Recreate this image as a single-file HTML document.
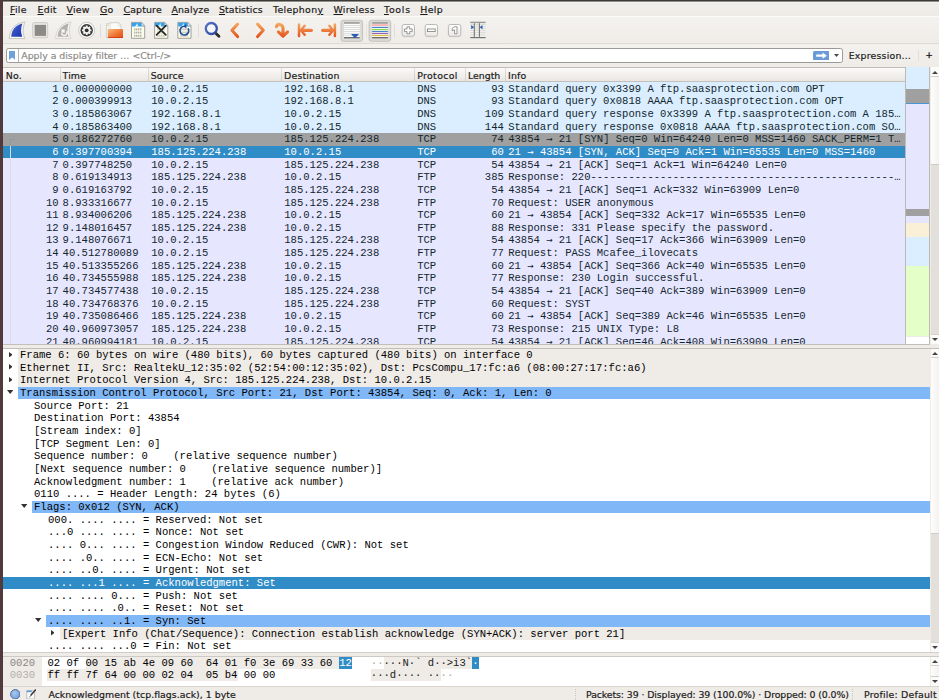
<!DOCTYPE html>
<html lang="en"><head><meta charset="utf-8"><title>Wireshark</title>
<style>
html,body{margin:0;padding:0}
body{width:939px;height:700px;overflow:hidden;position:relative;background:#efebe7;font-family:"DejaVu Sans","Liberation Sans",sans-serif;font-size:9.4px;color:#1a1a1a}
div,span,svg{position:absolute;box-sizing:border-box}
span.ar,span.il,u{position:static}
.m{font-family:"Liberation Mono",monospace;font-size:10.565px;line-height:12.667px;white-space:pre;color:#12272e}
.ar{font-family:"DejaVu Sans Mono","Liberation Mono",monospace;line-height:0}
.s{white-space:pre;line-height:12px;-webkit-text-stroke:0.18px currentColor}
u{text-decoration:underline;text-underline-offset:1.4px}
.row{left:3px;width:902px;height:12.667px}
.dns{background:#daeeff}.tcp{background:#e7e6ff}.syn{background:#a0a0a0}.sel{background:#308cc6}
.sel .m{color:#fff}
.d{color:#000}
</style></head><body>

<div style="left:0;top:0;width:939px;height:1px;background:#3b3a36"></div><div style="left:0;top:1px;width:939px;height:1px;background:#908d89"></div>
<div style="left:0;top:0;width:3.2px;height:700px;background:#513a3c"></div>
<div id="menubar" style="left:3.2px;top:2px;width:936px;height:14.2px;background:linear-gradient(#f6f5f3 0,#f0eeea 1.2px,#eeebe7)"></div>
<span class="s" style="left:10px;top:3.6px;letter-spacing:0.274px"><u>F</u>ile</span>
<span class="s" style="left:37.5px;top:3.6px;letter-spacing:0.282px"><u>E</u>dit</span>
<span class="s" style="left:66.5px;top:3.6px;letter-spacing:0.259px"><u>V</u>iew</span>
<span class="s" style="left:100px;top:3.6px;letter-spacing:0.142px"><u>G</u>o</span>
<span class="s" style="left:123.5px;top:3.6px;letter-spacing:0.146px"><u>C</u>apture</span>
<span class="s" style="left:171.5px;top:3.6px;letter-spacing:0.121px"><u>A</u>nalyze</span>
<span class="s" style="left:219px;top:3.6px;letter-spacing:0.094px"><u>S</u>tatistics</span>
<span class="s" style="left:273px;top:3.6px;letter-spacing:0.322px">Telephon<u>y</u></span>
<span class="s" style="left:333.5px;top:3.6px;letter-spacing:0.256px"><u>W</u>ireless</span>
<span class="s" style="left:384px;top:3.6px;letter-spacing:0.738px"><u>T</u>ools</span>
<span class="s" style="left:420.2px;top:3.6px;letter-spacing:0.377px"><u>H</u>elp</span>
<div id="toolbar" style="left:3.2px;top:16.2px;width:936px;height:27.6px;background:linear-gradient(#f4f2ef,#efece8);border-top:0.7px solid #fbfaf9;border-bottom:0.7px solid #dedad5"></div>
<svg style="left:0;top:17px" width="939" height="27" viewBox="0 17 939 27">
<defs>
<linearGradient id="gb" x1="0" y1="0" x2="1" y2="1"><stop offset="0" stop-color="#4a68d8"/><stop offset="1" stop-color="#1a30a8"/></linearGradient>
<linearGradient id="go" gradientUnits="userSpaceOnUse" x1="0" y1="23" x2="0" y2="37.5"><stop offset="0" stop-color="#f4ac66"/><stop offset="1" stop-color="#e2501a"/></linearGradient>
<linearGradient id="gf" x1="0" y1="0" x2="1" y2="1"><stop offset="0" stop-color="#f8bc7c"/><stop offset="0.6" stop-color="#ee7030"/><stop offset="1" stop-color="#e44a14"/></linearGradient>
<linearGradient id="gbtn" x1="0" y1="0" x2="0" y2="1"><stop offset="0" stop-color="#ffffff"/><stop offset="1" stop-color="#e9e8e6"/></linearGradient>
<linearGradient id="gmag" x1="0" y1="0" x2="1" y2="1"><stop offset="0" stop-color="#5673cc"/><stop offset="1" stop-color="#2c469c"/></linearGradient>
</defs>
<!-- start capture (blue fin) -->
<path d="M9.2,38.6C9.9,29.2 15.3,22.9 24.9,21.9C22.6,27.6 22.8,33.4 24.7,38.6Z" fill="#f7f7f6" stroke="#bbb9b5" stroke-width="0.8"/>
<path d="M11.2,36.8C11.8,29.8 15.7,24.9 22.4,23.6C20.6,28.4 20.8,32.8 22.2,36.8Z" fill="url(#gb)"/>
<!-- stop -->
<rect x="32.7" y="22.6" width="15" height="15.2" rx="1.2" fill="#e8e6e2" stroke="#c6c3bf" stroke-width="0.8"/>
<rect x="34.7" y="24.9" width="11.3" height="11" fill="#8b8a86"/>
<!-- restart (gray fin) -->
<path d="M55.5,38.6C56.2,29.2 61.6,22.9 71.1,21.9C68.8,27.6 69,33.4 70.9,38.6Z" fill="#f4f3f1" stroke="#d0cecb" stroke-width="0.8"/>
<path d="M57.6,36.8C58.2,29.8 62.1,24.9 68.7,23.6C66.9,28.4 67.1,32.8 68.5,36.8Z" fill="#b3b1ae"/>
<path d="M61.5,33.2A2.8,2.8 0 1 0 66.6,31.2" fill="none" stroke="#f6f6f5" stroke-width="1.5"/>
<rect x="61.4" y="29.4" width="3.3" height="3.3" fill="#f6f6f5"/>
<!-- options (gear) -->
<circle cx="86.7" cy="30.3" r="8" fill="#fbfbfa" stroke="#b8b6b2" stroke-width="0.7"/>
<circle cx="86.7" cy="30.3" r="6.2" fill="#3b3b3b"/>
<g fill="#f4f4f4"><circle cx="86.7" cy="30.3" r="3.5"/>
<g id="teeth"><rect x="85.7" y="25.6" width="2" height="9.4" rx="0.4"/><rect x="85.7" y="25.6" width="2" height="9.4" rx="0.4" transform="rotate(45 86.7 30.3)"/><rect x="85.7" y="25.6" width="2" height="9.4" rx="0.4" transform="rotate(90 86.7 30.3)"/><rect x="85.7" y="25.6" width="2" height="9.4" rx="0.4" transform="rotate(135 86.7 30.3)"/></g></g>
<circle cx="86.7" cy="30.3" r="1.9" fill="#2e2e2e"/>
<!-- separator -->
<rect x="100.1" y="23.6" width="0.8" height="13.6" fill="#dcd9d5"/>
<!-- open folder -->
<path d="M106.4,23.6H110.2V22.6H118.6L121,25V37.6H106.4Z" fill="#f1f1f0" stroke="#c3c2bf" stroke-width="0.6"/>
<rect x="107.2" y="24.6" width="1.6" height="1.4" fill="#f5c98a"/>
<path d="M110.6,23H118.2V26.2H120.6V30H110.6Z" fill="#fbfbfb" stroke="#d2d1ce" stroke-width="0.4"/>
<path d="M108.4,29H122.4Q123,29 123,29.6V37.2Q123,38 122.2,38H108.6Q107.8,38 107.8,37.2V29.6Q107.8,29 108.4,29Z" fill="url(#gf)"/>
<rect x="107.8" y="37.1" width="15.2" height="0.9" fill="#d63c10"/>
<!-- save -->
<g transform="translate(131.1,22)"><path d="M0.4,0.4H10.6L13.6,3.6V16.3H0.4Z" fill="#fcfdea" stroke="#8b8c88" stroke-width="0.8"/><path d="M0.8,0.8H10.4L13.2,3.8V4.6H0.8Z" fill="#35a3ea"/><path d="M3.6,4.6Q5.2,3.6 6.2,0.9Q6.3,3 7.2,4.6Z" fill="#f4fbff"/><path d="M10.5,0.8V3.7H13.2Z" fill="#f2f2ee" stroke="#a5a5a0" stroke-width="0.4"/><g fill="#a8a9a4"><rect x="3" y="6.4" width="1.3" height="1.9"/><rect x="5" y="6.4" width="1.3" height="1.9"/><rect x="7" y="6.4" width="1.3" height="1.9"/><rect x="9" y="6.4" width="1.3" height="1.9"/><rect x="3" y="9.6" width="1.3" height="1.9"/><rect x="5" y="9.6" width="1.3" height="1.9"/><rect x="7" y="9.6" width="1.3" height="1.9"/><rect x="9" y="9.6" width="1.3" height="1.9"/><rect x="3" y="12.8" width="1.3" height="1.9"/><rect x="5" y="12.8" width="1.3" height="1.9"/><rect x="7" y="12.8" width="1.3" height="1.9"/><rect x="9" y="12.8" width="1.3" height="1.9"/></g></g>
<!-- close -->
<g transform="translate(154.2,22)"><path d="M0.4,0.4H10.6L13.6,3.6V16.3H0.4Z" fill="#fcfdea" stroke="#8b8c88" stroke-width="0.8"/><path d="M0.8,0.8H10.4L13.2,3.8V4.6H0.8Z" fill="#35a3ea"/><path d="M3.6,4.6Q5.2,3.6 6.2,0.9Q6.3,3 7.2,4.6Z" fill="#f4fbff"/><path d="M10.5,0.8V3.7H13.2Z" fill="#f2f2ee" stroke="#a5a5a0" stroke-width="0.4"/><g fill="#a8a9a4" opacity="0.7"><rect x="3" y="6.4" width="1.3" height="1.9"/><rect x="5" y="6.4" width="1.3" height="1.9"/><rect x="7" y="6.4" width="1.3" height="1.9"/><rect x="9" y="6.4" width="1.3" height="1.9"/><rect x="3" y="9.6" width="1.3" height="1.9"/><rect x="5" y="9.6" width="1.3" height="1.9"/><rect x="7" y="9.6" width="1.3" height="1.9"/><rect x="9" y="9.6" width="1.3" height="1.9"/><rect x="3" y="12.8" width="1.3" height="1.9"/><rect x="5" y="12.8" width="1.3" height="1.9"/><rect x="7" y="12.8" width="1.3" height="1.9"/><rect x="9" y="12.8" width="1.3" height="1.9"/></g></g>
<path d="M156.6,25.6L165.8,34.8M165.8,25.6L156.6,34.8" stroke="#262626" stroke-width="1.7" stroke-linecap="round"/>
<!-- reload -->
<g transform="translate(177.4,22)"><path d="M0.4,0.4H10.6L13.6,3.6V16.3H0.4Z" fill="#fcfdea" stroke="#8b8c88" stroke-width="0.8"/><path d="M0.8,0.8H10.4L13.2,3.8V4.6H0.8Z" fill="#35a3ea"/><path d="M3.6,4.6Q5.2,3.6 6.2,0.9Q6.3,3 7.2,4.6Z" fill="#f4fbff"/><path d="M10.5,0.8V3.7H13.2Z" fill="#f2f2ee" stroke="#a5a5a0" stroke-width="0.4"/><g fill="#a8a9a4" opacity="0.8"><rect x="3" y="6.4" width="1.3" height="1.9"/><rect x="5" y="6.4" width="1.3" height="1.9"/><rect x="7" y="6.4" width="1.3" height="1.9"/><rect x="9" y="6.4" width="1.3" height="1.9"/><rect x="3" y="9.6" width="1.3" height="1.9"/><rect x="5" y="9.6" width="1.3" height="1.9"/><rect x="7" y="9.6" width="1.3" height="1.9"/><rect x="9" y="9.6" width="1.3" height="1.9"/><rect x="3" y="12.8" width="1.3" height="1.9"/><rect x="5" y="12.8" width="1.3" height="1.9"/><rect x="7" y="12.8" width="1.3" height="1.9"/><rect x="9" y="12.8" width="1.3" height="1.9"/></g></g>
<path d="M188.2,28.4A4.4,4.4 0 1 1 184.4,26.2" fill="none" stroke="#1f4b9c" stroke-width="1.6"/>
<path d="M186.4,24.2L183,26.2L186.4,28.4Z" fill="#1f4b9c"/>
<!-- separator -->
<rect x="198.1" y="23.6" width="0.8" height="13.6" fill="#dcd9d5"/>
<!-- find -->
<path d="M215.2,32.8L218.9,36.2" stroke="#2b2b2b" stroke-width="2.9" stroke-linecap="round"/>
<circle cx="211.3" cy="28.5" r="5.5" fill="#f6f6f6" stroke="url(#gmag)" stroke-width="2.3"/>
<!-- back / forward -->
<path d="M237.6,24.1L231.9,30.3L237.6,36.5" fill="none" stroke="#f9f4ef" stroke-width="4.6" stroke-linecap="round" stroke-linejoin="round"/>
<path d="M237.6,24.1L231.9,30.3L237.6,36.5" fill="none" stroke="url(#go)" stroke-width="3.1" stroke-linecap="round" stroke-linejoin="round"/>
<path d="M257.6,24.1L263.3,30.3L257.6,36.5" fill="none" stroke="#f9f4ef" stroke-width="4.6" stroke-linecap="round" stroke-linejoin="round"/>
<path d="M257.6,24.1L263.3,30.3L257.6,36.5" fill="none" stroke="url(#go)" stroke-width="3.1" stroke-linecap="round" stroke-linejoin="round"/>
<!-- jump -->
<path d="M276.4,26.6C277.4,23.6 282.2,23.4 283,27.8L283,34" fill="none" stroke="url(#go)" stroke-width="3.1" stroke-linecap="round"/>
<path d="M278.4,31.8L283,36.2L287.6,31.8" fill="none" stroke="url(#go)" stroke-width="3.1" stroke-linecap="round" stroke-linejoin="round"/>
<!-- first -->
<g stroke="url(#go)" stroke-linecap="round" stroke-linejoin="round" fill="none">
<path d="M299,24.6V36" stroke-width="2.5"/><path d="M301.4,30.3H311.4" stroke-width="3.2"/><path d="M304.6,25.8L301,30.3L304.6,34.8" stroke-width="2.5"/>
<path d="M334.9,24.6V36" stroke-width="2.5"/><path d="M322.6,30.3H332.6" stroke-width="3.2"/><path d="M329.4,25.8L333,30.3L329.4,34.8" stroke-width="2.5"/>
</g>
<!-- autoscroll (pressed) -->
<rect x="341" y="20.3" width="21.6" height="21" rx="2.4" fill="#dddbd7" stroke="#bbb8b4" stroke-width="0.8"/>
<rect x="344" y="22.2" width="15.7" height="16.2" fill="#fdfdfd"/>
<rect x="344" y="22.2" width="15.7" height="1.5" fill="#8e908e"/>
<g fill="#c4c6c3"><rect x="344" y="25.3" width="15.7" height="0.6"/><rect x="344" y="27.2" width="15.7" height="0.6"/><rect x="344" y="29.1" width="15.7" height="0.6"/><rect x="344" y="31" width="15.7" height="0.6"/><rect x="344" y="32.9" width="15.7" height="0.6"/><rect x="344" y="34.8" width="15.7" height="0.6"/></g>
<rect x="344" y="37.1" width="15.7" height="1.3" fill="#5f615f"/>
<path d="M351.2,34H358.8Q358.4,35.6 356.6,36.2V37.8H353.4V36.2Q351.6,35.6 351.2,34Z" fill="#2a5db2"/>
<rect x="366" y="24" width="0.8" height="13" fill="#e1ded9"/>
<!-- colorize (pressed) -->
<rect x="369.1" y="20.3" width="21.6" height="21" rx="2.4" fill="#dddbd7" stroke="#bbb8b4" stroke-width="0.8"/>
<rect x="372.1" y="22.2" width="15.8" height="16.2" fill="#fdfdfd"/>
<rect x="372.1" y="22.2" width="15.8" height="1.5" fill="#8e908e"/>
<rect x="372.1" y="24.4" width="15.8" height="1.3" fill="#f29494"/>
<rect x="372.1" y="26.8" width="15.8" height="1.2" fill="#4f82c8"/>
<rect x="372.1" y="28.9" width="15.8" height="1.2" fill="#84da42"/>
<rect x="372.1" y="30.9" width="15.8" height="1.2" fill="#4f82c8"/>
<rect x="372.1" y="32.9" width="15.8" height="1.2" fill="#9365a4"/>
<rect x="372.1" y="34.9" width="15.8" height="1.2" fill="#dcbc44"/>
<rect x="372.1" y="37" width="15.8" height="1.4" fill="#6a6c6a"/>
<rect x="394.1" y="23.6" width="0.8" height="13.6" fill="#dcd9d5"/>
<!-- zoom in/out/1:1 -->
<g stroke="#a9a7a3" stroke-width="0.8" fill="url(#gbtn)"><rect x="402.1" y="24.5" width="12.4" height="11.8" rx="2"/><rect x="425.2" y="24.5" width="12.4" height="11.8" rx="2"/><rect x="448.4" y="24.5" width="12.4" height="11.8" rx="2"/></g>
<g fill="#c9c7c3"><rect x="403.2" y="36.4" width="10.2" height="0.7" /><rect x="426.3" y="36.4" width="10.2" height="0.7"/><rect x="449.5" y="36.4" width="10.2" height="0.7"/></g>
<g fill="#fff" stroke="#7f7f7d" stroke-width="0.8"><path d="M407,26.8H409.6V29H412.2V31.6H409.6V33.8H407V31.6H404.4V29H407Z"/><rect x="427.4" y="29" width="7.8" height="2.6"/><path d="M454.4,26.8H457V33.8H454.6V29.8L452.2,30.8V28.4Z"/></g>
<!-- resize columns -->
<rect x="470.2" y="22" width="15.4" height="16" fill="#fbfbfa"/>
<rect x="470.2" y="21.7" width="15.4" height="1.5" fill="#999b98"/>
<g fill="#c6c8c4"><rect x="470.2" y="24.4" width="15.4" height="0.8"/><rect x="470.2" y="26.4" width="15.4" height="0.8"/><rect x="470.2" y="28.4" width="15.4" height="0.8"/><rect x="470.2" y="30.4" width="15.4" height="0.8"/><rect x="470.2" y="32.4" width="15.4" height="0.8"/><rect x="470.2" y="34.5" width="15.4" height="0.8"/></g>
<rect x="470.2" y="36.9" width="15.4" height="1.3" fill="#727472"/>
<rect x="473.8" y="23.2" width="1" height="13.7" fill="#6e706e"/><rect x="478.9" y="23.2" width="1" height="13.7" fill="#6e706e"/>
<path d="M471.2,25.1L474,27.2L471.2,29.3Z" fill="#2a5db2"/><path d="M482.5,25.1L479.7,27.2L482.5,29.3Z" fill="#2a5db2"/>
</svg>

<div id="filterbar" style="left:3.2px;top:43.8px;width:936px;height:23.6px;background:linear-gradient(#f3f1ee,#efece8)"></div>
<div style="left:6px;top:48.1px;width:837px;height:14.8px;background:#fff;border:1px solid #9c9a97;border-radius:2.5px"></div>
<div style="left:18.4px;top:49px;width:0.8px;height:12.6px;background:#b9b6b2"></div>
<svg style="left:9px;top:51px" width="6.4" height="9" viewBox="0 0 6.4 9"><path d="M0,0H6.4V9L3.2,6.6L0,9Z" fill="#6ea2d9"/></svg>
<span class="s" style="left:21.3px;top:50.1px;color:#8c8a87;letter-spacing:-0.019px">Apply a display filter … &lt;Ctrl-/&gt;</span>
<svg style="left:812.7px;top:50.8px" width="16.8" height="9.4" viewBox="0 0 16.8 9.4"><rect width="16.8" height="9.4" rx="1.6" fill="#6b9bd6"/><path d="M3.2,3.6H9.6V1.6L13.8,4.7L9.6,7.8V5.8H3.2Z" fill="#fff"/></svg>
<svg style="left:834.4px;top:53.6px" width="5" height="3" viewBox="0 0 5 3"><path d="M0,0H5L2.5,3Z" fill="#4a4a4a"/></svg>
<span class="s" style="left:848.7px;top:50.1px;letter-spacing:0.194px">Expression…</span>
<div style="left:918.4px;top:49.6px;width:0.8px;height:11.5px;background:#e2dfda"></div>
<span class="s" style="left:925.4px;top:49.4px;font-size:8.6px;-webkit-text-stroke:0.35px #1a1a1a">+</span>
<div id="plhead" style="left:3.2px;top:67.4px;width:901.8px;height:15px;background:linear-gradient(#fbfaf9,#f3f1ee 45%,#e9e6e2);border-top:0.7px solid #c1bdb8;border-bottom:0.7px solid #c4c0bb"></div>
<span class="s" style="left:5.8px;top:70.1px;letter-spacing:0.241px">No.</span>
<span class="s" style="left:62.6px;top:70.1px;letter-spacing:0.112px">Time</span>
<span class="s" style="left:150.8px;top:70.1px;letter-spacing:0.116px">Source</span>
<span class="s" style="left:284.1px;top:70.1px;letter-spacing:0.155px">Destination</span>
<span class="s" style="left:417.2px;top:70.1px;letter-spacing:0.352px">Protocol</span>
<span class="s" style="left:468px;top:70.1px;letter-spacing:-0.007px">Length</span>
<span class="s" style="left:508px;top:70.1px;letter-spacing:0.138px">Info</span>
<div style="left:59.9px;top:68.4px;width:1px;height:13.4px;background:linear-gradient(#e0ddd9,#cfcbc6)"></div>
<div style="left:147.6px;top:68.4px;width:1px;height:13.4px;background:linear-gradient(#e0ddd9,#cfcbc6)"></div>
<div style="left:281.3px;top:68.4px;width:1px;height:13.4px;background:linear-gradient(#e0ddd9,#cfcbc6)"></div>
<div style="left:414.4px;top:68.4px;width:1px;height:13.4px;background:linear-gradient(#e0ddd9,#cfcbc6)"></div>
<div style="left:465.1px;top:68.4px;width:1px;height:13.4px;background:linear-gradient(#e0ddd9,#cfcbc6)"></div>
<div style="left:505.1px;top:68.4px;width:1px;height:13.4px;background:linear-gradient(#e0ddd9,#cfcbc6)"></div>
<div id="plist" style="left:3.2px;top:82.4px;width:901.8px;height:261.6px;overflow:hidden;background:#e7e6ff">
<div class="row dns" style="left:0;top:0.000px">
<span class="m" style="right:846.60px;top:0.45px">1</span><span class="m" style="left:59.40px;top:0.45px">0.000000000</span><span class="m" style="left:148.10px;top:0.45px">10.0.2.15</span><span class="m" style="left:281.10px;top:0.45px">192.168.8.1</span><span class="m" style="left:414.00px;top:0.45px">DNS</span><span class="m" style="right:401.40px;top:0.45px">93</span><span class="m" style="left:505.00px;top:0.45px">Standard query 0x3399 A ftp.saasprotection.com OPT</span>
</div>
<div class="row dns" style="left:0;top:12.635px">
<span class="m" style="right:846.60px;top:0.45px">2</span><span class="m" style="left:59.40px;top:0.45px">0.000399913</span><span class="m" style="left:148.10px;top:0.45px">10.0.2.15</span><span class="m" style="left:281.10px;top:0.45px">192.168.8.1</span><span class="m" style="left:414.00px;top:0.45px">DNS</span><span class="m" style="right:401.40px;top:0.45px">93</span><span class="m" style="left:505.00px;top:0.45px">Standard query 0x0818 AAAA ftp.saasprotection.com OPT</span>
</div>
<div class="row dns" style="left:0;top:25.270px">
<span class="m" style="right:846.60px;top:0.45px">3</span><span class="m" style="left:59.40px;top:0.45px">0.185863067</span><span class="m" style="left:148.10px;top:0.45px">192.168.8.1</span><span class="m" style="left:281.10px;top:0.45px">10.0.2.15</span><span class="m" style="left:414.00px;top:0.45px">DNS</span><span class="m" style="right:401.40px;top:0.45px">109</span><span class="m" style="left:505.00px;top:0.45px">Standard query response 0x3399 A ftp.saasprotection.com A 185…</span>
</div>
<div class="row dns" style="left:0;top:37.905px">
<span class="m" style="right:846.60px;top:0.45px">4</span><span class="m" style="left:59.40px;top:0.45px">0.185863400</span><span class="m" style="left:148.10px;top:0.45px">192.168.8.1</span><span class="m" style="left:281.10px;top:0.45px">10.0.2.15</span><span class="m" style="left:414.00px;top:0.45px">DNS</span><span class="m" style="right:401.40px;top:0.45px">144</span><span class="m" style="left:505.00px;top:0.45px">Standard query response 0x0818 AAAA ftp.saasprotection.com SO…</span>
</div>
<div class="row syn" style="left:0;top:50.540px">
<span class="m" style="right:846.60px;top:0.45px">5</span><span class="m" style="left:59.40px;top:0.45px">0.186272760</span><span class="m" style="left:148.10px;top:0.45px">10.0.2.15</span><span class="m" style="left:281.10px;top:0.45px">185.125.224.238</span><span class="m" style="left:414.00px;top:0.45px">TCP</span><span class="m" style="right:401.40px;top:0.45px">74</span><span class="m" style="left:505.00px;top:0.45px">43854 <span class="ar">→</span> 21 [SYN] Seq=0 Win=64240 Len=0 MSS=1460 SACK_PERM=1 T…</span>
</div>
<div class="row sel" style="left:0;top:63.175px">
<span class="m" style="right:846.60px;top:0.45px">6</span><span class="m" style="left:59.40px;top:0.45px">0.397700394</span><span class="m" style="left:148.10px;top:0.45px">185.125.224.238</span><span class="m" style="left:281.10px;top:0.45px">10.0.2.15</span><span class="m" style="left:414.00px;top:0.45px">TCP</span><span class="m" style="right:401.40px;top:0.45px">60</span><span class="m" style="left:505.00px;top:0.45px">21 <span class="ar">→</span> 43854 [SYN, ACK] Seq=0 Ack=1 Win=65535 Len=0 MSS=1460</span>
</div>
<div class="row tcp" style="left:0;top:75.810px">
<span class="m" style="right:846.60px;top:0.45px">7</span><span class="m" style="left:59.40px;top:0.45px">0.397748250</span><span class="m" style="left:148.10px;top:0.45px">10.0.2.15</span><span class="m" style="left:281.10px;top:0.45px">185.125.224.238</span><span class="m" style="left:414.00px;top:0.45px">TCP</span><span class="m" style="right:401.40px;top:0.45px">54</span><span class="m" style="left:505.00px;top:0.45px">43854 <span class="ar">→</span> 21 [ACK] Seq=1 Ack=1 Win=64240 Len=0</span>
</div>
<div class="row tcp" style="left:0;top:88.445px">
<span class="m" style="right:846.60px;top:0.45px">8</span><span class="m" style="left:59.40px;top:0.45px">0.619134913</span><span class="m" style="left:148.10px;top:0.45px">185.125.224.238</span><span class="m" style="left:281.10px;top:0.45px">10.0.2.15</span><span class="m" style="left:414.00px;top:0.45px">FTP</span><span class="m" style="right:401.40px;top:0.45px">385</span><span class="m" style="left:505.00px;top:0.45px">Response: 220------------------------------------------------…</span>
</div>
<div class="row tcp" style="left:0;top:101.080px">
<span class="m" style="right:846.60px;top:0.45px">9</span><span class="m" style="left:59.40px;top:0.45px">0.619163792</span><span class="m" style="left:148.10px;top:0.45px">10.0.2.15</span><span class="m" style="left:281.10px;top:0.45px">185.125.224.238</span><span class="m" style="left:414.00px;top:0.45px">TCP</span><span class="m" style="right:401.40px;top:0.45px">54</span><span class="m" style="left:505.00px;top:0.45px">43854 <span class="ar">→</span> 21 [ACK] Seq=1 Ack=332 Win=63909 Len=0</span>
</div>
<div class="row tcp" style="left:0;top:113.715px">
<span class="m" style="right:846.60px;top:0.45px">10</span><span class="m" style="left:59.40px;top:0.45px">8.933316677</span><span class="m" style="left:148.10px;top:0.45px">10.0.2.15</span><span class="m" style="left:281.10px;top:0.45px">185.125.224.238</span><span class="m" style="left:414.00px;top:0.45px">FTP</span><span class="m" style="right:401.40px;top:0.45px">70</span><span class="m" style="left:505.00px;top:0.45px">Request: USER anonymous</span>
</div>
<div class="row tcp" style="left:0;top:126.350px">
<span class="m" style="right:846.60px;top:0.45px">11</span><span class="m" style="left:59.40px;top:0.45px">8.934006206</span><span class="m" style="left:148.10px;top:0.45px">185.125.224.238</span><span class="m" style="left:281.10px;top:0.45px">10.0.2.15</span><span class="m" style="left:414.00px;top:0.45px">TCP</span><span class="m" style="right:401.40px;top:0.45px">60</span><span class="m" style="left:505.00px;top:0.45px">21 <span class="ar">→</span> 43854 [ACK] Seq=332 Ack=17 Win=65535 Len=0</span>
</div>
<div class="row tcp" style="left:0;top:138.985px">
<span class="m" style="right:846.60px;top:0.45px">12</span><span class="m" style="left:59.40px;top:0.45px">9.148016457</span><span class="m" style="left:148.10px;top:0.45px">185.125.224.238</span><span class="m" style="left:281.10px;top:0.45px">10.0.2.15</span><span class="m" style="left:414.00px;top:0.45px">FTP</span><span class="m" style="right:401.40px;top:0.45px">88</span><span class="m" style="left:505.00px;top:0.45px">Response: 331 Please specify the password.</span>
</div>
<div class="row tcp" style="left:0;top:151.620px">
<span class="m" style="right:846.60px;top:0.45px">13</span><span class="m" style="left:59.40px;top:0.45px">9.148076671</span><span class="m" style="left:148.10px;top:0.45px">10.0.2.15</span><span class="m" style="left:281.10px;top:0.45px">185.125.224.238</span><span class="m" style="left:414.00px;top:0.45px">TCP</span><span class="m" style="right:401.40px;top:0.45px">54</span><span class="m" style="left:505.00px;top:0.45px">43854 <span class="ar">→</span> 21 [ACK] Seq=17 Ack=366 Win=63909 Len=0</span>
</div>
<div class="row tcp" style="left:0;top:164.255px">
<span class="m" style="right:846.60px;top:0.45px">14</span><span class="m" style="left:59.40px;top:0.45px">40.512780089</span><span class="m" style="left:148.10px;top:0.45px">10.0.2.15</span><span class="m" style="left:281.10px;top:0.45px">185.125.224.238</span><span class="m" style="left:414.00px;top:0.45px">FTP</span><span class="m" style="right:401.40px;top:0.45px">77</span><span class="m" style="left:505.00px;top:0.45px">Request: PASS Mcafee_ilovecats</span>
</div>
<div class="row tcp" style="left:0;top:176.890px">
<span class="m" style="right:846.60px;top:0.45px">15</span><span class="m" style="left:59.40px;top:0.45px">40.513355266</span><span class="m" style="left:148.10px;top:0.45px">185.125.224.238</span><span class="m" style="left:281.10px;top:0.45px">10.0.2.15</span><span class="m" style="left:414.00px;top:0.45px">TCP</span><span class="m" style="right:401.40px;top:0.45px">60</span><span class="m" style="left:505.00px;top:0.45px">21 <span class="ar">→</span> 43854 [ACK] Seq=366 Ack=40 Win=65535 Len=0</span>
</div>
<div class="row tcp" style="left:0;top:189.525px">
<span class="m" style="right:846.60px;top:0.45px">16</span><span class="m" style="left:59.40px;top:0.45px">40.734555988</span><span class="m" style="left:148.10px;top:0.45px">185.125.224.238</span><span class="m" style="left:281.10px;top:0.45px">10.0.2.15</span><span class="m" style="left:414.00px;top:0.45px">FTP</span><span class="m" style="right:401.40px;top:0.45px">77</span><span class="m" style="left:505.00px;top:0.45px">Response: 230 Login successful.</span>
</div>
<div class="row tcp" style="left:0;top:202.160px">
<span class="m" style="right:846.60px;top:0.45px">17</span><span class="m" style="left:59.40px;top:0.45px">40.734577438</span><span class="m" style="left:148.10px;top:0.45px">10.0.2.15</span><span class="m" style="left:281.10px;top:0.45px">185.125.224.238</span><span class="m" style="left:414.00px;top:0.45px">TCP</span><span class="m" style="right:401.40px;top:0.45px">54</span><span class="m" style="left:505.00px;top:0.45px">43854 <span class="ar">→</span> 21 [ACK] Seq=40 Ack=389 Win=63909 Len=0</span>
</div>
<div class="row tcp" style="left:0;top:214.795px">
<span class="m" style="right:846.60px;top:0.45px">18</span><span class="m" style="left:59.40px;top:0.45px">40.734768376</span><span class="m" style="left:148.10px;top:0.45px">10.0.2.15</span><span class="m" style="left:281.10px;top:0.45px">185.125.224.238</span><span class="m" style="left:414.00px;top:0.45px">FTP</span><span class="m" style="right:401.40px;top:0.45px">60</span><span class="m" style="left:505.00px;top:0.45px">Request: SYST</span>
</div>
<div class="row tcp" style="left:0;top:227.430px">
<span class="m" style="right:846.60px;top:0.45px">19</span><span class="m" style="left:59.40px;top:0.45px">40.735086466</span><span class="m" style="left:148.10px;top:0.45px">185.125.224.238</span><span class="m" style="left:281.10px;top:0.45px">10.0.2.15</span><span class="m" style="left:414.00px;top:0.45px">TCP</span><span class="m" style="right:401.40px;top:0.45px">60</span><span class="m" style="left:505.00px;top:0.45px">21 <span class="ar">→</span> 43854 [ACK] Seq=389 Ack=46 Win=65535 Len=0</span>
</div>
<div class="row tcp" style="left:0;top:240.065px">
<span class="m" style="right:846.60px;top:0.45px">20</span><span class="m" style="left:59.40px;top:0.45px">40.960973057</span><span class="m" style="left:148.10px;top:0.45px">185.125.224.238</span><span class="m" style="left:281.10px;top:0.45px">10.0.2.15</span><span class="m" style="left:414.00px;top:0.45px">FTP</span><span class="m" style="right:401.40px;top:0.45px">73</span><span class="m" style="left:505.00px;top:0.45px">Response: 215 UNIX Type: L8</span>
</div>
<div class="row tcp" style="left:0;top:252.700px">
<span class="m" style="right:846.60px;top:0.45px">21</span><span class="m" style="left:59.40px;top:0.45px">40.960994181</span><span class="m" style="left:148.10px;top:0.45px">10.0.2.15</span><span class="m" style="left:281.10px;top:0.45px">185.125.224.238</span><span class="m" style="left:414.00px;top:0.45px">TCP</span><span class="m" style="right:401.40px;top:0.45px">54</span><span class="m" style="left:505.00px;top:0.45px">43854 <span class="ar">→</span> 21 [ACK] Seq=46 Ack=408 Win=63909 Len=0</span>
</div>
</div>
<div style="left:10px;top:139.7px;width:0.9px;height:204px;background:#d9dbe8"></div>
<div style="left:10px;top:139.2px;width:5px;height:0.9px;background:#8f9aa3"></div>
<div style="left:10px;top:139.2px;width:0.9px;height:6.6px;background:#8f9aa3"></div>
<div style="left:3.2px;top:344.2px;width:927px;height:0.8px;background:#c2beb9"></div>
<div style="left:904.6px;top:67.4px;width:1px;height:277px;background:#bdb9b5"></div>
<div style="left:929.3px;top:67.4px;width:1.1px;height:277px;background:#bdb9b5"></div>
<div style="left:905.5px;top:67.4px;width:23.9px;height:21.60px;background:#daeeff"></div>
<div style="left:905.5px;top:89px;width:23.9px;height:13.80px;background:#a0a0a0"></div>
<div style="left:905.5px;top:102.8px;width:23.9px;height:0.80px;background:#4a96d2"></div>
<div style="left:905.5px;top:103.6px;width:23.9px;height:105.40px;background:#e7e6ff"></div>
<div style="left:905.5px;top:209px;width:23.9px;height:6.60px;background:#a0a0a0"></div>
<div style="left:905.5px;top:215.6px;width:23.9px;height:7.30px;background:#e7e6ff"></div>
<div style="left:905.5px;top:222.9px;width:23.9px;height:14.10px;background:#faf0d7"></div>
<div style="left:905.5px;top:237px;width:23.9px;height:29.20px;background:#daeeff"></div>
<div style="left:905.5px;top:266.2px;width:23.9px;height:70.30px;background:#e4ffc7"></div>
<div style="left:905.5px;top:336.5px;width:23.9px;height:7.50px;background:#ffffff"></div>
<div style="left:930.6px;top:67.4px;width:8.399999999999977px;height:276.60px;background:#e3e0dc"></div>
<div style="left:930.6px;top:67.4px;width:8.399999999999977px;height:9.4px;background:#fbfbfa;border-bottom:0.8px solid #d5d2ce"></div>
<div style="left:930.6px;top:334.40px;width:8.399999999999977px;height:9.6px;background:#fbfbfa;border-top:0.8px solid #d5d2ce"></div>
<div style="left:930.6px;top:77px;width:8.399999999999977px;height:88.00px;background:linear-gradient(90deg,#fdfdfc,#f3f2f0);border-bottom:0.8px solid #cfccc7"></div>
<svg style="left:931.60px;top:70.70px" width="6" height="3" viewBox="0 0 6 3"><path d="M0,3H6L3,0Z" fill="#444"/></svg>
<svg style="left:931.60px;top:337.80px" width="6" height="3" viewBox="0 0 6 3"><path d="M0,0H6L3,3Z" fill="#444"/></svg>
<div style="left:3.2px;top:348.2px;width:936px;height:0.8px;background:#c2beb9"></div>
<div id="details" style="left:3.2px;top:349px;width:927.2px;height:303px;background:#fff;overflow:hidden">
<div style="left:14.80px;top:-0.400px;width:928px;height:12.667px;background:#efebe7"></div>
<span class="m d" style="left:16.80px;top:0.050px;color:#000">Frame 6: 60 bytes on wire (480 bits), 60 bytes captured (480 bits) on interface 0</span>
<svg style="left:5.60px;top:2.73px" width="3.7" height="5.4" viewBox="0 0 3.7 5.4"><path d="M0,0V5.4L3.7,2.7Z" fill="#333"/></svg>
<div style="left:14.80px;top:12.267px;width:928px;height:12.667px;background:#efebe7"></div>
<span class="m d" style="left:16.80px;top:12.717px;color:#000">Ethernet II, Src: RealtekU_12:35:02 (52:54:00:12:35:02), Dst: PcsCompu_17:fc:a6 (08:00:27:17:fc:a6)</span>
<svg style="left:5.60px;top:15.40px" width="3.7" height="5.4" viewBox="0 0 3.7 5.4"><path d="M0,0V5.4L3.7,2.7Z" fill="#333"/></svg>
<div style="left:14.80px;top:24.934px;width:928px;height:12.667px;background:#efebe7"></div>
<span class="m d" style="left:16.80px;top:25.384px;color:#000">Internet Protocol Version 4, Src: 185.125.224.238, Dst: 10.0.2.15</span>
<svg style="left:5.60px;top:28.07px" width="3.7" height="5.4" viewBox="0 0 3.7 5.4"><path d="M0,0V5.4L3.7,2.7Z" fill="#333"/></svg>
<div style="left:14.80px;top:37.601px;width:928px;height:12.3px;background:#80b7f7"></div>
<span class="m d" style="left:16.80px;top:38.051px;color:#000">Transmission Control Protocol, Src Port: 21, Dst Port: 43854, Seq: 0, Ack: 1, Len: 0</span>
<svg style="left:4.20px;top:41.23px" width="6.4" height="3.9" viewBox="0 0 6.4 3.9"><path d="M0,0H6.4L3.2,3.9Z" fill="#333"/></svg>
<span class="m d" style="left:30.80px;top:50.718px;color:#000">Source Port: 21</span>
<span class="m d" style="left:30.80px;top:63.385px;color:#000">Destination Port: 43854</span>
<span class="m d" style="left:30.80px;top:76.052px;color:#000">[Stream index: 0]</span>
<span class="m d" style="left:30.80px;top:88.719px;color:#000">[TCP Segment Len: 0]</span>
<span class="m d" style="left:30.80px;top:101.386px;color:#000">Sequence number: 0    (relative sequence number)</span>
<span class="m d" style="left:30.80px;top:114.053px;color:#000">[Next sequence number: 0    (relative sequence number)]</span>
<span class="m d" style="left:30.80px;top:126.720px;color:#000">Acknowledgment number: 1    (relative ack number)</span>
<span class="m d" style="left:30.80px;top:139.387px;color:#000">0110 .... = Header Length: 24 bytes (6)</span>
<div style="left:28.80px;top:151.604px;width:928px;height:12.3px;background:#80b7f7"></div>
<span class="m d" style="left:30.80px;top:152.054px;color:#000">Flags: 0x012 (SYN, ACK)</span>
<svg style="left:18.20px;top:155.24px" width="6.4" height="3.9" viewBox="0 0 6.4 3.9"><path d="M0,0H6.4L3.2,3.9Z" fill="#333"/></svg>
<span class="m d" style="left:44.80px;top:164.721px;color:#000">000. .... .... = Reserved: Not set</span>
<span class="m d" style="left:44.80px;top:177.388px;color:#000">...0 .... .... = Nonce: Not set</span>
<span class="m d" style="left:44.80px;top:190.055px;color:#000">.... 0... .... = Congestion Window Reduced (CWR): Not set</span>
<span class="m d" style="left:44.80px;top:202.722px;color:#000">.... .0.. .... = ECN-Echo: Not set</span>
<span class="m d" style="left:44.80px;top:215.389px;color:#000">.... ..0. .... = Urgent: Not set</span>
<div style="left:0;top:227.606px;width:928px;height:12.667px;background:#308cc6"></div>
<span class="m d" style="left:44.80px;top:228.056px;color:#fff">.... ...1 .... = Acknowledgment: Set</span>
<span class="m d" style="left:44.80px;top:240.723px;color:#000">.... .... 0... = Push: Not set</span>
<span class="m d" style="left:44.80px;top:253.390px;color:#000">.... .... .0.. = Reset: Not set</span>
<div style="left:42.80px;top:265.607px;width:928px;height:12.3px;background:#80b7f7"></div>
<span class="m d" style="left:44.80px;top:266.057px;color:#000">.... .... ..1. = Syn: Set</span>
<svg style="left:32.20px;top:269.24px" width="6.4" height="3.9" viewBox="0 0 6.4 3.9"><path d="M0,0H6.4L3.2,3.9Z" fill="#333"/></svg>
<div style="left:56.80px;top:278.274px;width:928px;height:12.667px;background:#efebe7"></div>
<span class="m d" style="left:58.80px;top:278.724px;color:#000">[Expert Info (Chat/Sequence): Connection establish acknowledge (SYN+ACK): server port 21]</span>
<svg style="left:47.60px;top:281.41px" width="3.7" height="5.4" viewBox="0 0 3.7 5.4"><path d="M0,0V5.4L3.7,2.7Z" fill="#333"/></svg>
<span class="m d" style="left:44.80px;top:291.391px;color:#000">.... .... ...0 = Fin: Not set</span>
</div>
<div style="left:3.2px;top:652px;width:936px;height:0.8px;background:#d2cec9"></div>
<div style="left:930.6px;top:349px;width:8.399999999999977px;height:303.00px;background:#e3e0dc"></div>
<div style="left:930.6px;top:349px;width:8.399999999999977px;height:9.4px;background:#fbfbfa;border-bottom:0.8px solid #d5d2ce"></div>
<div style="left:930.6px;top:642.40px;width:8.399999999999977px;height:9.6px;background:#fbfbfa;border-top:0.8px solid #d5d2ce"></div>
<div style="left:930.6px;top:358.4px;width:8.399999999999977px;height:175.60px;background:linear-gradient(90deg,#fdfdfc,#f3f2f0);border-bottom:0.8px solid #cfccc7"></div>
<svg style="left:931.60px;top:352.30px" width="6" height="3" viewBox="0 0 6 3"><path d="M0,3H6L3,0Z" fill="#444"/></svg>
<svg style="left:931.60px;top:645.80px" width="6" height="3" viewBox="0 0 6 3"><path d="M0,0H6L3,3Z" fill="#444"/></svg>
<div style="left:3.2px;top:656.3px;width:936px;height:0.8px;background:#cdc9c4"></div>
<div id="hex" style="left:3.2px;top:657.1px;width:927.2px;height:28.9px;background:#fff;overflow:hidden">
<div style="left:0;top:0;width:38.4px;height:28.9px;background:#efebe7"></div>
<div style="left:82.34px;top:0.2px;width:253.60px;height:12px;background:#efebe7"></div>
<div style="left:335.94px;top:0.2px;width:12.68px;height:12px;background:#308cc6"></div>
<div style="left:380.32px;top:0.2px;width:88.76px;height:12px;background:#efebe7"></div>
<div style="left:469.08px;top:0.2px;width:6.34px;height:12px;background:#308cc6"></div>
<div style="left:44.30px;top:12.2px;width:190.20px;height:12px;background:#efebe7"></div>
<div style="left:367.64px;top:12.2px;width:69.74px;height:12px;background:#efebe7"></div>
<span class="m" style="left:6.60px;top:0.30px;color:#8b8885">0020</span>
<span class="m" style="left:6.60px;top:12.30px;color:#b3b0ac">0030</span>
<span class="m" style="left:44.30px;top:0.30px;color:#000">02 0f 00 15 ab 4e 09 60  64 01 f0 3e 69 33 60 </span>
<span class="m" style="left:335.94px;top:0.30px;color:#fff">12</span>
<span class="m" style="left:44.30px;top:12.30px;color:#000">ff ff 7f 64 00 00 02 04  05 b4 00 00</span>
<span class="m" style="left:367.64px;top:0.30px;color:#a9a6a2">··</span>
<span class="m" style="left:380.32px;top:0.30px;color:#1c1c1c">···N·` d··&gt;i3`</span>
<span class="m" style="left:469.08px;top:0.30px;color:#fff">·</span>
<span class="m" style="left:367.64px;top:12.30px;color:#1c1c1c">···d···· ··</span>
<span class="m" style="left:437.38px;top:12.30px;color:#a9a6a2">··</span>
</div>
<div style="left:930.6px;top:657.1px;width:8.399999999999977px;height:28.90px;background:#e3e0dc"></div>
<div style="left:930.6px;top:657.1px;width:8.399999999999977px;height:9.4px;background:#fbfbfa;border-bottom:0.8px solid #d5d2ce"></div>
<div style="left:930.6px;top:676.40px;width:8.399999999999977px;height:9.6px;background:#fbfbfa;border-top:0.8px solid #d5d2ce"></div>
<div style="left:930.6px;top:666.4px;width:8.399999999999977px;height:10.60px;background:linear-gradient(90deg,#fdfdfc,#f3f2f0);border-bottom:0.8px solid #cfccc7"></div>
<svg style="left:931.60px;top:660.40px" width="6" height="3" viewBox="0 0 6 3"><path d="M0,3H6L3,0Z" fill="#444"/></svg>
<svg style="left:931.60px;top:679.80px" width="6" height="3" viewBox="0 0 6 3"><path d="M0,0H6L3,3Z" fill="#444"/></svg>
<div id="status" style="left:3.2px;top:686px;width:936px;height:14px;background:#efebe7;border-top:0.8px solid #d8d4cf"></div>
<svg style="left:9.6px;top:688.8px" width="10.6" height="10.6" viewBox="0 0 10.6 10.6"><defs><radialGradient id="sg" cx="40%" cy="35%" r="70%"><stop offset="0" stop-color="#a9c8ef"/><stop offset="1" stop-color="#6f9fdc"/></radialGradient></defs><circle cx="5.3" cy="5.3" r="4.7" fill="url(#sg)" stroke="#3f5f8f" stroke-width="0.9"/></svg>
<svg style="left:26px;top:688.6px" width="10.4" height="10.6" viewBox="0 0 10.4 10.6"><path d="M0.8,1.6H6.4L8.6,3.6V10H0.8Z" fill="#fbfbfa" stroke="#aaa7a3" stroke-width="0.7"/><rect x="0.8" y="1.6" width="5" height="1.6" fill="#5b9be0"/><path d="M9.8,0.6L4.6,6.6" stroke="#3a3a3a" stroke-width="1.5"/><path d="M4.9,6.2L3.4,8.4" stroke="#777" stroke-width="1"/></svg>
<span class="s" style="left:48.4px;top:688.5px;letter-spacing:0.019px">Acknowledgment (tcp.flags.ack), 1 byte</span>
<span class="s" style="left:586px;top:688.5px;letter-spacing:-0.099px">Packets: 39 · Displayed: 39 (100.0%) · Dropped: 0 (0.0%)</span>
<span class="s" style="left:864px;top:688.5px;letter-spacing:0.203px">Profile: Default</span>
<div style="left:575px;top:689.0px;width:0.9px;height:0.9px;background:#cbc7c2"></div>
<div style="left:575px;top:690.9px;width:0.9px;height:0.9px;background:#cbc7c2"></div>
<div style="left:575px;top:692.8px;width:0.9px;height:0.9px;background:#cbc7c2"></div>
<div style="left:575px;top:694.7px;width:0.9px;height:0.9px;background:#cbc7c2"></div>
<div style="left:575px;top:696.6px;width:0.9px;height:0.9px;background:#cbc7c2"></div>
<div style="left:575px;top:698.5px;width:0.9px;height:0.9px;background:#cbc7c2"></div>
<div style="left:852.4px;top:689.0px;width:0.9px;height:0.9px;background:#cbc7c2"></div>
<div style="left:852.4px;top:690.9px;width:0.9px;height:0.9px;background:#cbc7c2"></div>
<div style="left:852.4px;top:692.8px;width:0.9px;height:0.9px;background:#cbc7c2"></div>
<div style="left:852.4px;top:694.7px;width:0.9px;height:0.9px;background:#cbc7c2"></div>
<div style="left:852.4px;top:696.6px;width:0.9px;height:0.9px;background:#cbc7c2"></div>
<div style="left:852.4px;top:698.5px;width:0.9px;height:0.9px;background:#cbc7c2"></div>
</body></html>
